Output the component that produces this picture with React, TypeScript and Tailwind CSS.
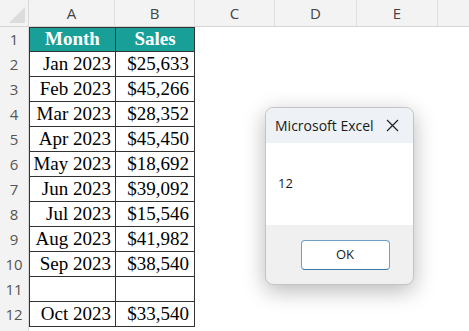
const columns = [
  { label: 'A', width: 'w-[86px]' },
  { label: 'B', width: 'w-[80px]' },
  { label: 'C', width: 'w-[80px]' },
  { label: 'D', width: 'w-[82px]' },
  { label: 'E', width: 'w-[81px]' },
];

const rows: [string, string][] = [
  ['Jan 2023', '$25,633'],
  ['Feb 2023', '$45,266'],
  ['Mar 2023', '$28,352'],
  ['Apr 2023', '$45,450'],
  ['May 2023', '$18,692'],
  ['Jun 2023', '$39,092'],
  ['Jul 2023', '$15,546'],
  ['Aug 2023', '$41,982'],
  ['Sep 2023', '$38,540'],
  ['', ''],
  ['Oct 2023', '$33,540'],
];

const uiFont = "font-['Open_Sans','Liberation_Sans',sans-serif]";
const cellFont = "font-['Liberation_Serif','Times_New_Roman',serif]";

function RowHeader({ n }: { n?: number }) {
  return (
    <div className={`w-[29px] shrink-0 bg-[#f3f3f3] border-r border-[#d9d9d9] flex items-center justify-center text-[15px] text-[#555] ${uiFont}`}>
      {n}
    </div>
  );
}

function MessageBox() {
  return (
    <div className="absolute left-[265px] top-[107px] w-[149px] h-[178px] rounded-[8px] border border-[#c4c4c4] bg-[#f0f0f0] overflow-hidden shadow-[0_6px_22px_rgba(0,0,0,0.28)] flex flex-col">
      <div className={`h-[35px] bg-[#eef2f6] flex items-center justify-between pl-[9px] pr-[14px] text-[14px] text-[#1a1a1a] ${uiFont}`}>
        <span>Microsoft Excel</span>
        <svg width="13" height="13" viewBox="0 0 13 13" className="text-[#222]">
          <path d="M1 1 L12 12 M12 1 L1 12" stroke="currentColor" strokeWidth="1.2" fill="none" />
        </svg>
      </div>
      <div className={`h-[82px] bg-white flex items-center pl-[12px] text-[13px] text-[#1a1a1a] ${uiFont}`}>12</div>
      <div className="flex-1 flex items-center justify-center pl-[11px]">
        <div className={`w-[89px] h-[30px] rounded-[4px] bg-white border border-[#6f9fc4] border-b-[#3e78a8] flex items-center justify-center text-[13px] text-[#1a1a1a] ${uiFont}`}>
          OK
        </div>
      </div>
    </div>
  );
}

export default function App() {
  return (
    <div className="relative w-[469px] h-[331px] bg-white overflow-hidden">
      {/* column header strip */}
      <div className="flex h-[27px] bg-[#f3f3f3] border-b border-[#d4d4d4]">
        <div className="w-[29px] shrink-0 relative border-r border-[#d9d9d9]">
          <div className="absolute right-[3px] bottom-[3px] w-0 h-0 border-l-[16px] border-l-transparent border-b-[16px] border-b-[#dcdcdc]" />
        </div>
        {columns.map((c) => (
          <div
            key={c.label}
            className={`${c.width} shrink-0 border-r border-[#e0e0e0] flex items-center justify-center text-[15px] text-[#444] ${uiFont}`}
          >
            {c.label}
          </div>
        ))}
        <div className="flex-1" />
      </div>

      {/* header row */}
      <div className="flex h-[25px]">
        <RowHeader n={1} />
        <div className={`w-[86px] shrink-0 bg-[#18a098] border border-[#333] border-r-0 flex items-center justify-center text-white font-bold text-[19px] ${cellFont}`}>
          Month
        </div>
        <div className={`w-[80px] shrink-0 bg-[#18a098] border border-[#333] flex items-center justify-center text-white font-bold text-[19px] ${cellFont}`}>
          Sales
        </div>
      </div>

      {rows.map(([month, sales], i) => (
        <div key={i} className="flex h-[25px]">
          <RowHeader n={i + 2} />
          <div className={`w-[86px] shrink-0 border-l border-b border-[#333] flex items-center justify-end pr-[4px] text-[19px] text-black ${cellFont}`}>
            {month}
          </div>
          <div className={`w-[80px] shrink-0 border-l border-r border-b border-[#333] flex items-center justify-end pr-[5px] text-[19px] text-black ${cellFont}`}>
            {sales}
          </div>
        </div>
      ))}

      <div className="flex h-[25px]">
        <RowHeader />
      </div>

      <MessageBox />
    </div>
  );
}
